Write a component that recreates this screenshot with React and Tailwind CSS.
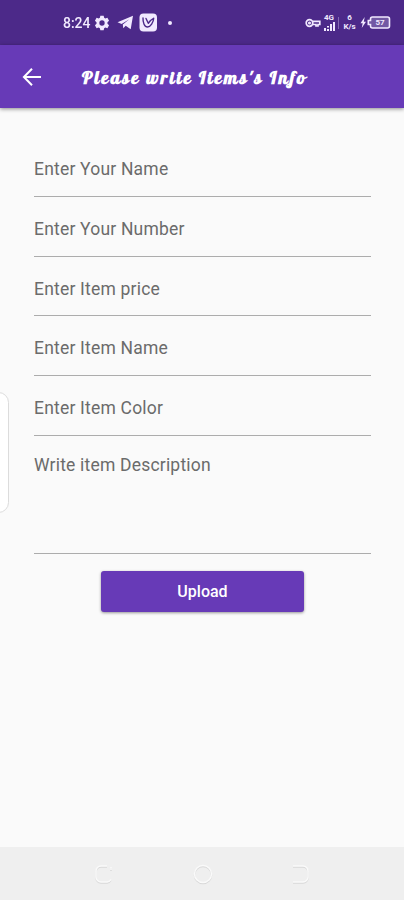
import React from 'react'

const fields = [
  { label: 'Enter Your Name', box: 'h-[60px]' },
  { label: 'Enter Your Number', box: 'h-[60px]' },
  { label: 'Enter Item price', box: 'h-[59px]' },
  { label: 'Enter Item Name', box: 'h-[60px]' },
  { label: 'Enter Item Color', box: 'h-[60px]' },
]

function StatusBar() {
  return (
    <div className="h-[45px] bg-[#4c2989] flex items-center text-[#f1e9ff] pl-[63px] pr-[13px]">
      <span className="w-[28px] whitespace-nowrap font-['Roboto',sans-serif] text-[15px] leading-[18px] font-medium">
        <span className="inline-block origin-left scale-x-[0.93]">8:24</span>
      </span>
      <svg className="ml-[3px]" width="16" height="16" viewBox="0 0 24 24" fill="currentColor">
        <path fillRule="evenodd" d="M9.500 1h5l.7 3.200 1.800 1 3.100-1 2.500 4.300-2.400 2.200v2.600l2.400 2.200-2.500 4.300-3.100-1-1.800 1-.7 3.200h-5l-.7-3.200-1.800-1-3.100 1-2.500-4.300 2.400-2.200v-2.600L1.400 8.500l2.500-4.300 3.100 1 1.800-1L9.500 1zM12 8a4 4 0 1 0 0 8 4 4 0 0 0 0-8z" />
      </svg>
      <svg className="ml-[7px]" width="17" height="15" viewBox="0 0 17 15" fill="currentColor">
        <path d="M0.500 7.200 16 0.700 13.700 14.300 8.700 10.800 6.300 13.200 5.800 9.600 12.300 4.200 4.600 8.900z" />
      </svg>
      <svg className="ml-[5px]" width="19" height="19" viewBox="0 0 19 19">
        <rect x="0.500" y="0.500" width="17.500" height="18" rx="4" fill="currentColor" />
        <path d="M4 5c-.2 4.500 1.500 9 4.500 9s6-5 6.200-8.800L11.500 7.500 9.300 10.200 7 5.500" fill="none" stroke="#4c2989" strokeWidth="1.400" strokeLinecap="round" strokeLinejoin="round" />
      </svg>
      <span className="ml-[10px] size-[4px] rounded-full bg-current" />

      <div className="ml-auto flex items-center">
        <svg width="16" height="10" viewBox="0 0 16 10" fill="none" stroke="currentColor" strokeWidth="1.700">
          <circle cx="4.500" cy="5" r="3.300" />
          <circle cx="4.500" cy="5" r="0.700" />
          <path d="M7.800 3.300h7v3.200H13v1.500h-2V6.500H7.800" />
        </svg>
        <div className="ml-[3px] w-[13px] h-[17px] flex flex-col items-start">
          <span className="h-[7px] font-['Roboto',sans-serif] text-[8px] leading-[7px] font-bold">4G</span>
          <svg width="13" height="10" viewBox="0 0 13 10" fill="currentColor">
            <path d="M0 7h2v3H0zM3 5h2v1.500H3zM3 8h2v2H3zM6 3h2v7H6zM9 1h2v9H9z" />
          </svg>
        </div>
        <span className="ml-px w-px h-[12px] bg-[#8367b3]" />
        <div className="ml-[4px] w-[13px] flex flex-col items-center font-['Roboto',sans-serif] font-bold">
          <span className="text-[8px] leading-[8px]">6</span>
          <span className="text-[8px] leading-[9px]">K/s</span>
        </div>
        <svg className="ml-[4px]" width="31" height="13" viewBox="0 0 31 13">
          <path d="M4.700 1 .5 7.300h2.200L1.700 12 6 5.700H3.800z" fill="currentColor" />
          <path d="M12.500 1h15A2 2 0 0 1 29.500 3v7a2 2 0 0 1-2 2h-15a2 2 0 0 1-2-2V8.500H8.300v-4h2.200V3a2 2 0 0 1 2-2z" fill="#7258a4" stroke="currentColor" strokeWidth="1.600" />
          <text x="20" y="9.400" textAnchor="middle" fontFamily="Roboto, sans-serif" fontSize="8" fontWeight="700" fill="currentColor">57</text>
        </svg>
      </div>
    </div>
  )
}

function AppBar() {
  return (
    <header className="relative h-[63px] bg-[#673ab7] flex items-center pl-[22px] shadow-[0_1px_4px_rgba(0,0,0,0.45)]">
      <svg width="20" height="20" viewBox="0 0 20 20" fill="none" stroke="#fff" strokeWidth="2">
        <path d="M10 1.700 1.900 10l8.100 8.300M2 10h17" />
      </svg>
      <h1 className="ml-[40px] pt-[2px] whitespace-nowrap font-['Lobster','Liberation_Serif',serif] text-[18px] leading-[24px] font-bold tracking-[2.200px] text-white">
        Please write Items's Info
      </h1>
    </header>
  )
}

function NavBar() {
  return (
    <nav className="h-[53px] bg-[#efefef] flex items-center justify-between pl-[94px] pr-[93px]">
      <svg className="drop-shadow-[0_1px_0_#d8d8d8]" width="20" height="20" viewBox="0 0 20 20" fill="none" stroke="#fafafa" strokeWidth="1.500">
        <path d="M13 2H7a5 5 0 0 0-5 5v6a5 5 0 0 0 5 5h6a5 5 0 0 0 4-2.500M17 3v3" />
      </svg>
      <svg className="drop-shadow-[0_1px_0_#d8d8d8]" width="20" height="20" viewBox="0 0 20 20" fill="none" stroke="#fafafa" strokeWidth="1.500">
        <circle cx="10" cy="10" r="8.500" />
      </svg>
      <svg className="drop-shadow-[0_1px_0_#d8d8d8]" width="20" height="20" viewBox="0 0 20 20" fill="none" stroke="#fafafa" strokeWidth="1.500">
        <path d="M2 2h10a5 5 0 0 1 5 5v6a5 5 0 0 1-5 5H2" />
      </svg>
    </nav>
  )
}

export default function App() {
  return (
    <div className="relative w-[404px] h-[900px] overflow-hidden flex flex-col bg-[#fafafa] font-['Roboto',sans-serif]">
      <StatusBar />
      <AppBar />

      <main className="flex-1 px-[34px] pt-[29px]">
        <form className="text-[17.500px] leading-[20px] tracking-[0.200px] text-[#6b6b6b]">
          {fields.map(f => (
            <div key={f.label} className={`${f.box} w-[337px] pt-[22px] border-b border-[#acacac]`}>
              {f.label}
            </div>
          ))}
          <div className="h-[118px] w-[337px] pt-[19px] border-b border-[#acacac]">
            Write item Description
          </div>
          <button type="button" className="mt-[17px] ml-[67px] w-[203px] h-[41px] flex items-center justify-center rounded-[3px] bg-[#673ab7] text-white text-[16px] font-medium tracking-normal shadow-[0_1px_3px_rgba(0,0,0,0.4)]">
            Upload
          </button>
        </form>
      </main>

      <NavBar />

      {/* edge panel handle */}
      <div className="absolute left-[-12px] top-[392px] w-[21px] h-[121px] rounded-[12px] border border-[#dcdcdc] bg-white" />
    </div>
  )
}
